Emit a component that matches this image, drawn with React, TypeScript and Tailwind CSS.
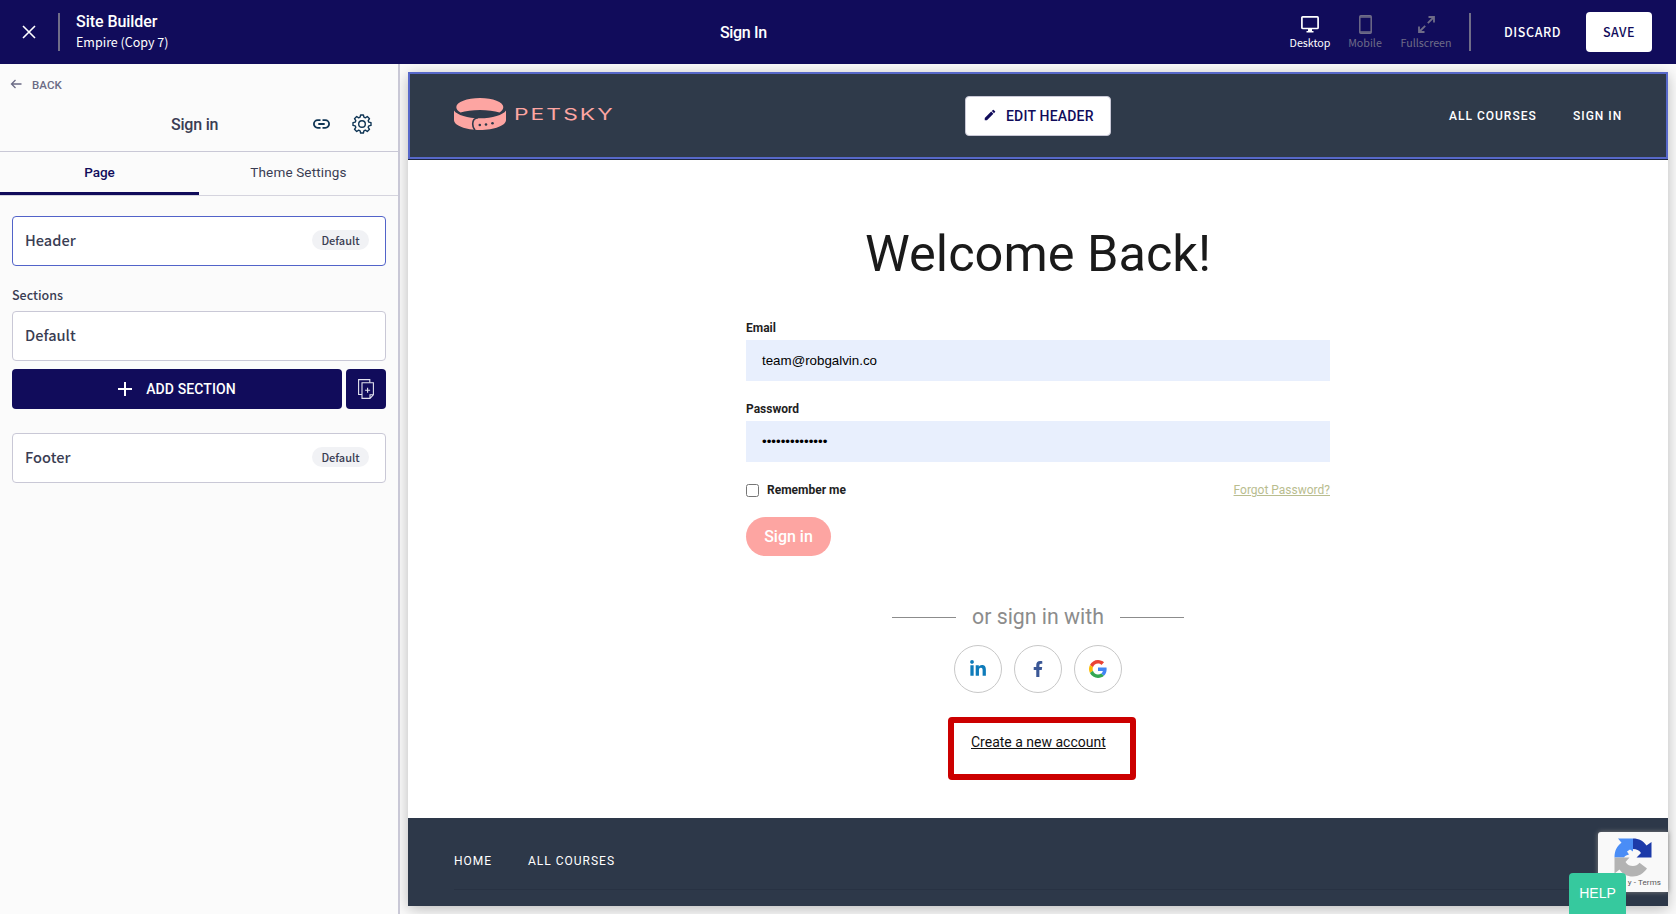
import React from "react";
import { FaFacebookF, FaLinkedinIn } from "react-icons/fa";
import { MdModeEdit } from "react-icons/md";

const sourceSans = "font-['Noto_Sans_CJK_SC','Noto_Sans',sans-serif]";
const roboto = "font-[Roboto,sans-serif]";

function CloseIcon() {
  return (
    <svg width="14" height="14" viewBox="0 0 14 14" stroke="#fff" strokeWidth="1.6" fill="none">
      <path d="M1 1l12 12M13 1L1 13" />
    </svg>
  );
}

function BackIcon() {
  return (
    <svg width="12" height="10" viewBox="0 0 12 10" stroke="#6b6b85" strokeWidth="1.3" fill="none">
      <path d="M11.500 5H1.500M5.500 1L1.500 5l4 4" />
    </svg>
  );
}

function LinkIcon() {
  return (
    <svg width="17" height="10" viewBox="0 0 17 10" stroke="#0e3454" strokeWidth="1.8" fill="none">
      <path d="M7.500 1.200H4.700a3.800 3.800 0 000 7.600h2.800M9.500 1.200h2.800a3.800 3.800 0 010 7.600H9.500M5.300 5h6.400" />
    </svg>
  );
}

function GearIcon() {
  return (
    <svg width="20" height="20" viewBox="0 0 20 20" stroke="#0e3454" strokeWidth="1.4" strokeLinejoin="round" fill="none">
      <path d="M8.6 1h2.8l.5 2.2 1.4.6 2-1.3 2.2 2.2-1.3 2 .6 1.4 2.2.5v2.8l-2.2.5-.6 1.4 1.3 2-2.2 2.2-2-1.3-1.4.6-.5 2.2H8.6l-.5-2.2-1.4-.6-2 1.3-2.2-2.2 1.3-2-.6-1.4L1 11.4V8.6l2.2-.5.6-1.4-1.3-2 2.2-2.2 2 1.3 1.4-.6z" />
      <circle cx="10" cy="10" r="3.3" />
    </svg>
  );
}

function DesktopIcon() {
  return (
    <svg width="18" height="17" viewBox="0 0 18 17" fill="none">
      <rect x="0.9" y="0.9" width="16.2" height="11.6" rx="0.8" stroke="#fff" strokeWidth="1.7" />
      <path d="M7 13h4v2h1.5v1.5h-7V15H7z" fill="#fff" />
    </svg>
  );
}

function MobileIcon() {
  return (
    <svg width="13" height="19" viewBox="0 0 13 19" fill="none" stroke="#6f6c88">
      <rect x="0.8" y="0.8" width="11.4" height="17.4" rx="1" strokeWidth="1.5" />
      <path d="M1 2h11M1 17h11" strokeWidth="1.3" />
    </svg>
  );
}

function FullscreenIcon() {
  return (
    <svg width="17" height="17" viewBox="0 0 17 17" fill="none" stroke="#6f6c88" strokeWidth="1.8">
      <path d="M10.5 1H16v5.5M15.5 1.5L9.8 7.2M6.5 16H1v-5.5M1.5 15.5l5.7-5.7" />
    </svg>
  );
}

function CopyIcon() {
  return (
    <svg width="16" height="20" viewBox="0 0 16 20" fill="none" stroke="#e4e4ef" strokeWidth="1.1">
      <path d="M4 15.5H.6V.6h11.2V3.6" />
      <path d="M4 3.8h11.4v12L12 19.4H4zM15.4 15.8H12v3.6M9.6 8.8v5M7.1 11.3h5" />
    </svg>
  );
}

function GoogleIcon() {
  return (
    <svg width="18" height="18" viewBox="0 0 48 48">
      <path fill="#ea4335" d="M24 9.500c3.540 0 6.710 1.220 9.210 3.600l6.850-6.850C35.900 2.380 30.470 0 24 0 14.620 0 6.510 5.380 2.560 13.220l7.980 6.190C12.430 13.720 17.740 9.500 24 9.500z" />
      <path fill="#4285f4" d="M46.980 24.550c0-1.570-.15-3.090-.38-4.550H24v9.020h12.940c-.58 2.960-2.260 5.480-4.780 7.180l7.730 6c4.510-4.180 7.090-10.360 7.090-17.650z" />
      <path fill="#fbbc05" d="M10.530 28.590c-.48-1.450-.76-2.990-.76-4.590s.27-3.140.76-4.590l-7.980-6.190C.92 16.460 0 20.120 0 24c0 3.880.92 7.540 2.560 10.780l7.970-6.190z" />
      <path fill="#34a853" d="M24 48c6.480 0 11.930-2.130 15.890-5.810l-7.730-6c-2.150 1.450-4.920 2.300-8.160 2.300-6.260 0-11.570-4.220-13.470-9.910l-7.980 6.190C6.510 42.620 14.620 48 24 48z" />
    </svg>
  );
}

function CollarLogo() {
  return (
    <svg width="52" height="32" viewBox="0 0 52 32" fill="none">
      <path d="M2.300 9C2.300 4 13 0 26 0s23.300 4 23.300 9c0 2-1.300 4-3.800 5.600C40.500 13 33.500 12 26 12s-14.500 1-19.500 2.600C3.700 13 2.300 11 2.300 9z" fill="#fda5a2" />
      <path d="M0 12.500C3 17 13.500 20.300 26 20.300S49 17 52 12.500V22c0 5.500-11.600 10-26 10S0 27.500 0 22z" fill="#fda5a2" />
      <path d="M24 19.800c-3.600.3-5.300 3-5.300 6.200 0 2.700.8 4.600 2.300 6" stroke="#2f3a4a" strokeWidth="1.6" />
      <circle cx="25.800" cy="27" r="1.300" fill="#2f3a4a" />
      <circle cx="32" cy="26.500" r="1.300" fill="#2f3a4a" />
      <circle cx="38.500" cy="25.200" r="1.300" fill="#2f3a4a" />
    </svg>
  );
}

function RecaptchaIcon() {
  return (
    <svg width="38" height="39" viewBox="0 0 38 39">
      <path d="M19 .5v13l-3-2-3 2 2 3c-2 .500-4 1-5 3H.5C.5 12.500 3 8 7.500 4.800L4 .5z" fill="#4a8df6" />
      <path d="M19 .5c6 0 10.500 2.500 13.500 7L37.500 4v15.500H22.500l4.500-4.500c-2-3-4.500-4-8-4z" fill="#1c3aa9" />
      <path d="M.5 19.500H15.500l-4 4.500c2 3 4.500 4 7.500 4 2.700 0 4.700-1 6.500-3.300l7.500 5.800C29.500 35.500 24.500 38.500 19 38.500c-6 0-10.500-2.500-13.500-7l-5 4z" fill="#b3b3b3" />
    </svg>
  );
}

function SectionCard({ name, badge, active }: { name: string; badge?: string; active?: boolean }) {
  return (
    <div
      className={`flex h-[50px] items-center justify-between rounded-[4px] border bg-white pr-4 pb-px pl-3 ${
        active ? "border-[#5263c9]" : "border-[#c9c8d6]"
      }`}
    >
      <span className={`${sourceSans} text-[14.6px] leading-none font-medium text-[#3a3d53]`}>{name}</span>
      {badge && (
        <span className={`${sourceSans} mb-px flex h-5 w-[57px] items-center justify-center rounded-full bg-[#f1f2f5] text-[11px] leading-none font-medium text-[#3a3d53]`}>
          {badge}
        </span>
      )}
    </div>
  );
}

function TopBar() {
  return (
    <header className="flex h-16 shrink-0 items-center bg-[#110c5b] text-white">
      <div className="flex w-[720px] items-center">
        <div className="ml-[22px]"><CloseIcon /></div>
        <div className="ml-[22px] h-[38px] w-[2px] bg-[#706d88]" />
        <div className="ml-4 flex flex-col">
          <span className={`${roboto} text-[16px] leading-5 font-medium tracking-[-0.05px]`}>Site Builder</span>
          <span className={`${sourceSans} text-[12.5px] leading-5`}>Empire (Copy 7)</span>
        </div>
      </div>
      <span className={`${roboto} pt-px text-[16px] font-medium tracking-[-0.35px]`}>Sign In</span>
      <div className={`${sourceSans} ml-auto flex items-center text-[10.7px] leading-none`}>
        <div className="flex h-[37px] w-[40px] flex-col items-center justify-between pt-[2px] pb-[2px]">
          <DesktopIcon />
          <span>Desktop</span>
        </div>
        <div className="ml-[18px] flex h-[37px] w-[34px] flex-col items-center justify-between pt-px pb-[2px] text-[#6f6c88]">
          <MobileIcon />
          <span>Mobile</span>
        </div>
        <div className="ml-[18px] flex h-[37px] w-[52px] flex-col items-center justify-between pt-[2px] pb-[2px] text-[#6f6c88]">
          <FullscreenIcon />
          <span>Fullscreen</span>
        </div>
        <div className="ml-[17px] h-[38px] w-[2px] bg-[#706d88]" />
        <span className="ml-[33px] w-[57px] pt-px text-[12.5px] font-medium tracking-[0.6px]">DISCARD</span>
        <div className="mr-6 ml-[25px] flex h-10 w-[66px] items-center justify-center rounded-[4px] bg-white pt-px text-[12.5px] font-medium tracking-[0.5px] text-[#110c5b]">
          SAVE
        </div>
      </div>
    </header>
  );
}

function Sidebar() {
  return (
    <aside className="flex w-[400px] shrink-0 flex-col border-r-2 border-[#c9c8d6] bg-[#fbfbfb]">
      <div className="flex h-[42px] items-center pl-[10px] text-[#6b6b85]">
        <div className="pb-[2px]"><BackIcon /></div>
        <span className={`${roboto} ml-[10px] pt-px text-[11.5px] font-medium tracking-[0.1px]`}>BACK</span>
      </div>
      <div className="flex h-[46px] items-center border-b border-[#c9c8d6] pb-[9px]">
        <span className={`${roboto} ml-[171px] w-[142px] pt-px text-[16px] font-medium tracking-[-0.2px] text-[#3a3d53]`}>Sign in</span>
        <LinkIcon />
        <div className="ml-[22px]"><GearIcon /></div>
      </div>
      <div className={`${roboto} flex h-[44px] border-b border-[#d5d4de] text-[13.5px]`}>
        <div className="h-[43px] w-[199px] border-b-[3px] border-[#110c5b] text-center leading-[40px] font-medium text-[#110c5b]">Page</div>
        <div className="w-[199px] text-center leading-[40px] tracking-[0.15px] text-[#3a3d53]">Theme Settings</div>
      </div>
      <div className="flex flex-col pt-5 pr-3 pl-3">
        <SectionCard name="Header" badge="Default" active />
        <div className={`${sourceSans} mt-[19px] mb-[6px] text-[12.5px] leading-5 font-medium text-[#3a3d53]`}>Sections</div>
        <SectionCard name="Default" />
        <div className="mt-2 mb-6 flex h-10 gap-1">
          <div className={`${roboto} flex w-[330px] items-center justify-center rounded-[4px] bg-[#110c5b] text-[14px] font-medium tracking-[0.1px] text-white`}>
            <svg width="14" height="14" viewBox="0 0 14 14" stroke="#fff" strokeWidth="2"><path d="M7 0v14M0 7h14" /></svg>
            <span className="ml-[14px]">ADD SECTION</span>
          </div>
          <div className="flex w-10 items-center justify-center rounded-[4px] bg-[#110c5b]">
            <CopyIcon />
          </div>
        </div>
        <SectionCard name="Footer" badge="Default" />
      </div>
    </aside>
  );
}

function SiteHeader() {
  return (
    <div className="h-[88px] shrink-0 bg-[#1f2740]">
      <div className="relative flex h-[87px] items-center border-2 border-[#5768c9] bg-[#2f3a4a]">
        <div className="ml-[44px] flex w-[260px] items-center pb-[3px]">
          <CollarLogo />
          <span className="ml-[8px] origin-left scale-x-[1.38] font-[Inter,sans-serif] text-[16.5px] leading-none tracking-[1.5px] text-[#fda5a2]">
            PETSKY
          </span>
        </div>
        <div className={`${roboto} ml-auto flex pt-px text-[12px] font-medium text-white`}>
          <span className="w-[124px] tracking-[1px]">ALL COURSES</span>
          <span className="w-[93px] tracking-[1px]">SIGN IN</span>
        </div>
        <div className={`${roboto} absolute top-[22px] left-[555px] flex h-10 w-[146px] items-center rounded-[4px] border border-[#c9c8d6] bg-white pl-[17px] text-[14px] font-medium text-[#110c5b]`}>
          <div className="pb-[2px]"><MdModeEdit size={14} /></div>
          <span className="ml-[9px] tracking-[0.2px]">EDIT HEADER</span>
        </div>
      </div>
    </div>
  );
}

function SignInForm() {
  return (
    <div className={`${roboto} mx-auto flex w-[584px] flex-col`}>
      <h1 className="mt-[64px] text-center text-[50.5px] leading-[60px] whitespace-nowrap text-[#1a1a1a]">Welcome Back!</h1>
      <label className="mt-[34px] text-[12px] leading-5 font-bold text-[#1f1f1f]">Email</label>
      <div className="mt-[2px] flex h-[41px] items-center bg-[#e8effd] pl-4 font-['Liberation_Sans',Arial,sans-serif] text-[13.33px] text-black">
        team@robgalvin.co
      </div>
      <label className="mt-[18px] text-[12px] leading-5 font-bold text-[#1f1f1f]">Password</label>
      <div className="mt-[2px] flex h-[41px] items-center bg-[#e8effd] pl-4 font-['Liberation_Sans',Arial,sans-serif] text-[13.33px] text-black">
        ••••••••••••••
      </div>
      <div className="mt-[18px] flex h-5 items-center text-[12px]">
        <span className="h-[13px] w-[13px] rounded-[2.5px] border border-[#767676] bg-white" />
        <span className="ml-2 font-bold text-[#1f1f1f]">Remember me</span>
        <span className="ml-auto text-[#b9bd8f] underline">Forgot Password?</span>
      </div>
      <div className="mt-[17px] flex h-[39px] w-[85px] items-center justify-center rounded-[20px] bg-[#fda5a2] text-[16px] font-medium text-white">
        Sign in
      </div>
    </div>
  );
}

function SocialSignIn() {
  const circle = "flex h-12 w-12 items-center justify-center rounded-full border border-[#c8c8c8] bg-white";
  return (
    <div className={`${roboto} flex flex-col items-center`}>
      <div className="mt-[46px] flex h-[30px] items-center text-[21.3px] text-[#8c8c8c]">
        <span className="h-px w-16 bg-[#8c8c8c]" />
        <span className="w-[164px] text-center">or sign in with</span>
        <span className="h-px w-16 bg-[#8c8c8c]" />
      </div>
      <div className="mt-[13px] flex gap-3">
        <div className={circle}><FaLinkedinIn size={18} color="#0e7bba" /></div>
        <div className={circle}><FaFacebookF size={16} color="#3a5796" /></div>
        <div className={circle}><GoogleIcon /></div>
      </div>
      <div className="mt-6 ml-[8px] h-[63px] w-[188px] rounded-[4px] border-[6px] border-[#cc0000] pt-[9px] pl-[17px] text-[14px] leading-5 whitespace-nowrap text-[#111] underline">
        Create a new account
      </div>
    </div>
  );
}

function SiteFooter() {
  return (
    <div className="relative mt-auto h-[88px] shrink-0 bg-[#2d3849]">
      <div className={`${roboto} mx-[46px] flex h-[72px] items-center border-b border-[#283243] pt-[15px] text-[12px] tracking-[1px] text-white`}>
        <span className="w-[74px]">HOME</span>
        <span>ALL COURSES</span>
      </div>
      <div className={`${roboto} absolute top-[14px] right-0 h-[60px] w-[70px] rounded-l-[3px] bg-[#f9f9f9] shadow-[0_0_5px_#808080]`}>
        <div className="pt-[6px] pl-[16px]"><RecaptchaIcon /></div>
        <div className="pr-[7px] text-right text-[8px] leading-3 tracking-[0.1px] whitespace-nowrap text-[#555]">y - Terms</div>
      </div>
    </div>
  );
}

export default function App() {
  return (
    <div className="relative flex h-[914px] w-[1676px] flex-col overflow-hidden bg-white">
      <TopBar />
      <div className="flex min-h-0 flex-1">
        <Sidebar />
        <main className="flex min-w-0 flex-1 overflow-hidden bg-[#fbfbfb] p-2">
          <div className="flex w-[1260px] flex-col bg-white shadow-[0_3px_14px_rgba(0,0,0,0.26)]">
            <SiteHeader />
            <SignInForm />
            <SocialSignIn />
            <SiteFooter />
          </div>
        </main>
      </div>
      <div className="absolute right-[50px] bottom-0 flex h-[41px] w-[57px] items-center justify-center rounded-t-[4px] bg-[#36c99e] font-['Liberation_Sans',Arial,sans-serif] text-[14px] text-white">
        HELP
      </div>
    </div>
  );
}
